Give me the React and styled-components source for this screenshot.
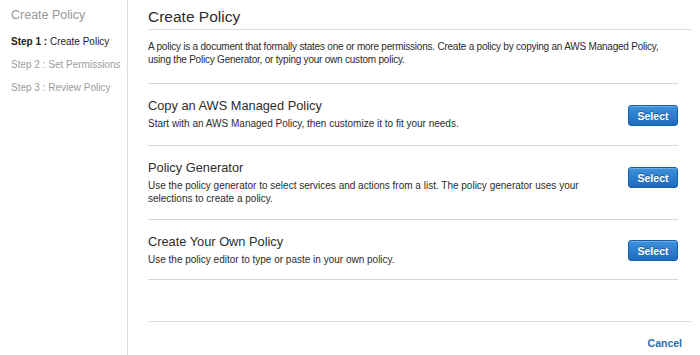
import styled, { createGlobalStyle } from 'styled-components';

const GlobalStyle = createGlobalStyle`
  html, body {
    margin: 0;
    padding: 0;
    background: #fff;
  }
  body {
    font-family: "Liberation Sans", Arial, Helvetica, sans-serif;
    color: #333;
  }
`;

// Layout
const Page = styled.div`
  display: flex;
  width: 700px;
  height: 355px;
  overflow: hidden;
`;

const Sidebar = styled.nav`
  width: 128px;
  flex-shrink: 0;
  border-right: 1px solid #dcdcdc;
  padding: 7px 0 0 11px;
  box-sizing: border-box;
`;

const SidebarTitle = styled.div`
  font-size: 12.5px;
  line-height: 16px;
  color: #999;
`;

const StepList = styled.ul`
  list-style: none;
  margin: 12px 0 0;
  padding: 0;
  display: flex;
  flex-direction: column;
  gap: 9px;
`;

const Step = styled.li`
  font-size: 10px;
  line-height: 14px;
  color: ${(p) => (p.$active ? '#222' : '#9c9c9c')};

  b {
    font-weight: bold;
  }
`;

const Main = styled.main`
  flex: 1;
  display: flex;
  flex-direction: column;
  padding: 0 8px 0 20px;
`;

const Title = styled.h1`
  margin: 0;
  padding: 8px 0 3px;
  font-size: 15.5px;
  line-height: 18px;
  font-weight: normal;
  color: #2e2e2e;
  border-bottom: 1px solid #dedede;
`;

const Body = styled.div`
  padding-right: 14px;
`;

const Intro = styled.p`
  margin: 10px 0 0;
  padding-bottom: 17px;
  font-size: 10px;
  line-height: 13px;
  letter-spacing: -0.22px;
  color: #2b2b2b;
  border-bottom: 1px solid #d6d6d6;
`;

const Option = styled.section`
  display: flex;
  align-items: flex-start;
  padding: 14px 0 ${(p) => p.$bottom || 15}px;
  border-bottom: 1px solid #d6d6d6;
`;

const OptionText = styled.div`
  flex: 1;
  padding-right: 30px;
`;

const OptionTitle = styled.h2`
  margin: 0;
  font-size: 12.8px;
  line-height: 16px;
  font-weight: normal;
  color: #2e2e2e;
`;

const OptionDesc = styled.p`
  margin: 3px 0 0;
  font-size: 10px;
  line-height: 13px;
  color: #2b2b2b;
`;

const SelectButton = styled.button`
  margin-top: ${(p) => p.$offset || 7}px;
  width: 50px;
  height: 21px;
  padding: 0;
  border: 1px solid #1b5da6;
  border-radius: 3px;
  background: linear-gradient(#3d92dc, #1e6bc0);
  box-shadow: inset 0 1px 0 rgba(255, 255, 255, 0.25);
  color: #fff;
  font-family: inherit;
  font-size: 10.5px;
  font-weight: bold;
  text-shadow: 0 -1px 0 rgba(0, 0, 0, 0.35);
  cursor: pointer;
`;

const Footer = styled.footer`
  margin-top: auto;
  border-top: 1px solid #dedede;
  padding: 13px 10px 5px 0;
  line-height: 14px;
  text-align: right;
`;

const CancelLink = styled.a`
  font-size: 10.5px;
  line-height: 14px;
  font-weight: bold;
  color: #2a6db5;
  text-decoration: none;
  cursor: pointer;
`;

const options = [
  {
    title: 'Copy an AWS Managed Policy',
    desc: 'Start with an AWS Managed Policy, then customize it to fit your needs.',
  },
  {
    title: 'Policy Generator',
    desc: 'Use the policy generator to select services and actions from a list. The policy generator uses your selections to create a policy.',
    bottom: 14,
  },
  {
    title: 'Create Your Own Policy',
    desc: 'Use the policy editor to type or paste in your own policy.',
    offset: 6,
    bottom: 13,
  },
];

export default function App() {
  return (
    <>
      <GlobalStyle />
      <Page>
        <Sidebar>
          <SidebarTitle>Create Policy</SidebarTitle>
          <StepList>
            <Step $active>
              <b>Step 1 :</b> Create Policy
            </Step>
            <Step>Step 2 : Set Permissions</Step>
            <Step>Step 3 : Review Policy</Step>
          </StepList>
        </Sidebar>

        <Main>
          <Title>Create Policy</Title>
          <Body>
            <Intro>
              A policy is a document that formally states one or more permissions. Create a policy by copying an AWS Managed Policy,
              using the Policy Generator, or typing your own custom policy.
            </Intro>
            {options.map((o) => (
              <Option key={o.title} $bottom={o.bottom}>
                <OptionText>
                  <OptionTitle>{o.title}</OptionTitle>
                  <OptionDesc>{o.desc}</OptionDesc>
                </OptionText>
                <SelectButton $offset={o.offset}>Select</SelectButton>
              </Option>
            ))}
          </Body>
          <Footer>
            <CancelLink>Cancel</CancelLink>
          </Footer>
        </Main>
      </Page>
    </>
  );
}
